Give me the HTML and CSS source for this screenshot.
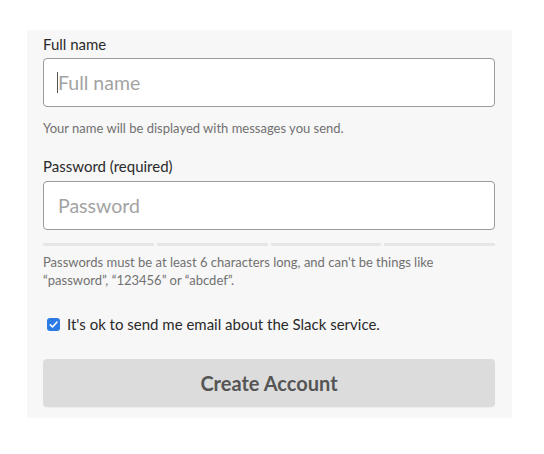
FILE: index.html
```html
<!DOCTYPE html>
<html lang="en">
<head>
<meta charset="utf-8">
<title>Create Account</title>
<link rel="stylesheet" href="styles.css">
</head>
<body>
<form class="panel">
  <label class="label" for="fullname">Full name</label>
  <div class="input-wrap">
    <input class="input" id="fullname" type="text" placeholder="Full name">
    <span class="caret"></span>
  </div>
  <p class="help help-name">Your name will be displayed with messages you send.</p>

  <label class="label label-pw" for="password">Password (required)</label>
  <div class="input-wrap">
    <input class="input" id="password" type="password" placeholder="Password">
  </div>
  <div class="strength">
    <span class="seg"></span><span class="seg"></span><span class="seg"></span><span class="seg"></span>
  </div>
  <p class="help help-pw">Passwords must be at least 6 characters long, and can't be things like<br>“password”, “123456” or “abcdef”.</p>

  <label class="check">
    <span class="box">
      <svg width="13" height="13" viewBox="0 0 13 13"><rect x="0" y="0" width="13" height="13" rx="3" fill="#2c7be5"/><path d="M3.3 6.8 L5.5 9 L9.8 4.2" fill="none" stroke="#fff" stroke-width="1.6" stroke-linecap="round" stroke-linejoin="round"/></svg>
    </span>
    <span class="check-text">It's ok to send me email about the Slack service.</span>
  </label>

  <button class="btn" type="button">Create Account</button>
</form>
</body>
</html>
```
FILE: styles.css
```css
* { box-sizing: border-box; }
html, body { margin: 0; padding: 0; background: #fff; }
body { font-family: Lato, "Noto Sans", sans-serif; }

.panel {
  margin: 30px 0 0 27px;
  width: 485px;
  height: 388px;
  background: #f7f7f7;
  padding: 5px 17px 0 16px;
  display: flex;
  flex-direction: column;
}

.label {
  display: block;
  font-size: 15px;
  line-height: 18px;
  color: #2a2a2a;
  margin: 0 0 5px;
}
.label-pw { margin-top: 21px; margin-bottom: 6px; }

.input-wrap { position: relative; }
.input {
  display: block;
  width: 452px;
  height: 49px;
  border: 1px solid #9b9b9b;
  border-radius: 4px;
  background: #fff;
  padding: 0 14px;
  font-family: Lato, "Noto Sans", sans-serif;
  font-size: 19.5px;
  color: #333;
  outline: none;
}
.input::placeholder { color: #a3a3a3; }
.caret {
  position: absolute;
  left: 14px;
  top: 14px;
  width: 1px;
  height: 21px;
  background: #555;
}

.help {
  margin: 13px 0 0;
  font-size: 13px;
  line-height: 16px;
  color: #717171;
}
.help-pw { margin-top: 7px; line-height: 18px; }

.strength {
  display: flex;
  gap: 3px;
  margin-top: 13px;
}
.seg {
  flex: 1;
  height: 3px;
  background: #e6e6e6;
  border-radius: 1px;
}

.check {
  display: flex;
  align-items: center;
  gap: 7px;
  margin: 26px 0 0 4px;
  font-size: 15px;
  line-height: 18px;
  color: #2a2a2a;
}
.box { display: flex; }
.box svg { display: block; }

.btn {
  margin-top: 26px;
  width: 452px;
  height: 48px;
  border: none;
  border-radius: 4px;
  background: #dcdcdc;
  color: #555;
  font-family: Lato, "Noto Sans", sans-serif;
  font-weight: 700;
  font-size: 20px;
  box-shadow: 0 1px 1px rgba(0,0,0,0.04);
}
```
